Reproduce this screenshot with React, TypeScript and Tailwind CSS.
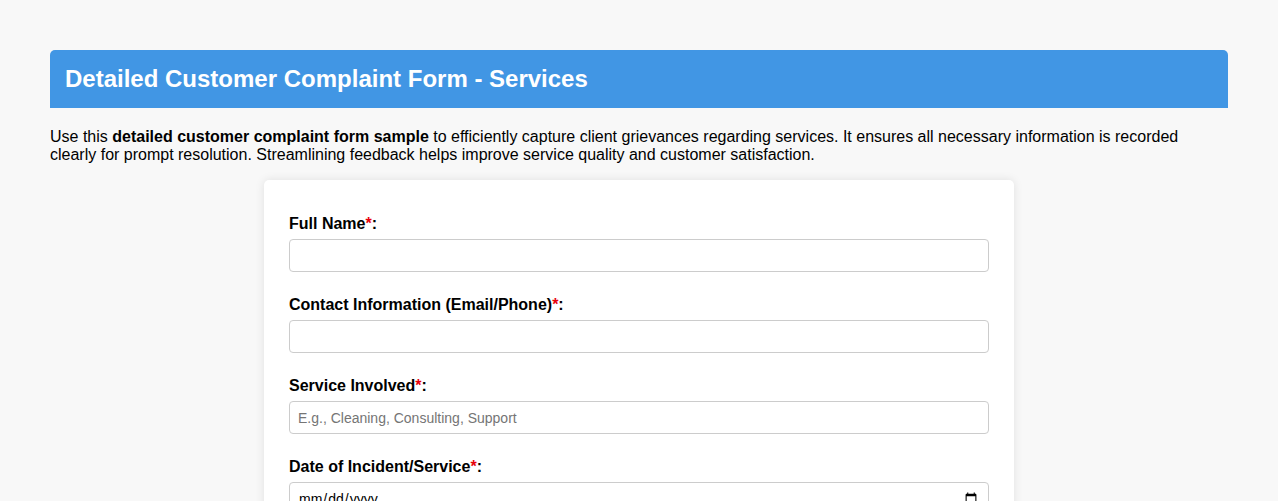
import React from "react";

const font = { fontFamily: '"Liberation Sans", Arial, sans-serif' };

function Field({
  label,
  type = "text",
  placeholder,
}: {
  label: string;
  type?: string;
  placeholder?: string;
}) {
  return (
    <div className="mb-[24px]">
      <label className="mb-[6px] block text-base font-bold leading-[18px] text-black">
        {label}
        <span className="text-red-600">*</span>:
      </label>
      <input
        type={type}
        placeholder={placeholder}
        className="block h-[33px] w-full rounded border border-[#ccc] bg-white px-2 text-sm text-black placeholder:text-[#757575] focus:outline-none"
      />
    </div>
  );
}

export default function App() {
  return (
    <div className="min-h-screen bg-[#f8f8f8] px-[50px] pt-[50px]" style={font}>
      <div className="rounded-t-[5px] bg-[#4196e4] px-[15px] py-[15px]">
        <h1 className="text-2xl font-bold leading-[28px] text-white">
          Detailed Customer Complaint Form - Services
        </h1>
      </div>
      <p className="mt-[20px] text-base leading-[18px] text-black">
        Use this <strong>detailed customer complaint form sample</strong> to efficiently capture client
        grievances regarding services. It ensures all necessary information is recorded clearly for prompt
        resolution. Streamlining feedback helps improve service quality and customer satisfaction.
      </p>
      <div className="mx-auto mt-[16px] w-[750px] rounded-[5px] bg-white px-[25px] pt-[35px] pb-[25px] shadow-[0_0_10px_rgba(0,0,0,0.1)]">
        <Field label="Full Name" />
        <Field label="Contact Information (Email/Phone)" />
        <Field label="Service Involved" placeholder="E.g., Cleaning, Consulting, Support" />
        <Field label="Date of Incident/Service" type="date" />
        <Field label="Description of Complaint" />
      </div>
    </div>
  );
}
